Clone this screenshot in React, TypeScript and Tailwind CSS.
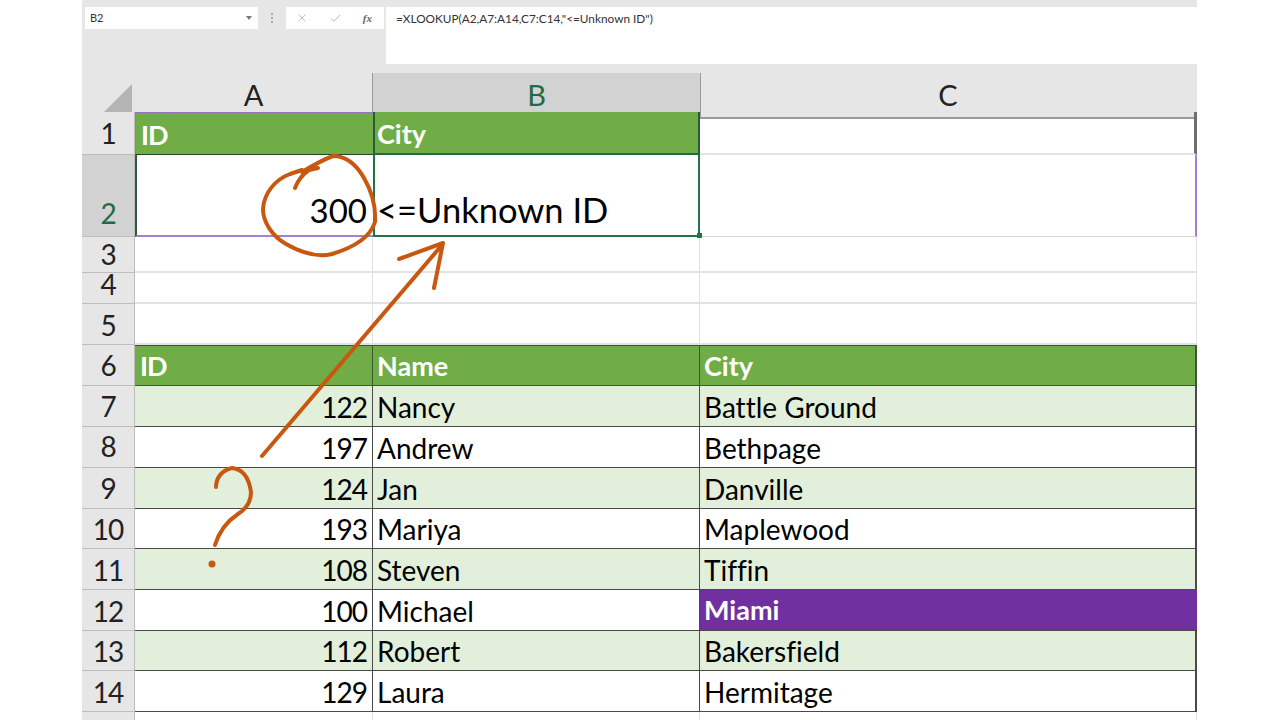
import { Check, X } from "lucide-react";

const people = [
  { n: "7", id: "122", name: "Nancy", city: "Battle Ground", h: "h-[41px]", band: true, pb: "pb-[6px]" },
  { n: "8", id: "197", name: "Andrew", city: "Bethpage", h: "h-[41px]", band: false, pb: "pb-[7px]" },
  { n: "9", id: "124", name: "Jan", city: "Danville", h: "h-[41px]", band: true, pb: "pb-[6px]" },
  { n: "10", id: "193", name: "Mariya", city: "Maplewood", h: "h-[40px]", band: false, pb: "pb-[5px]" },
  { n: "11", id: "108", name: "Steven", city: "Tiffin", h: "h-[41px]", band: true, pb: "pb-[5px]" },
  { n: "12", id: "100", name: "Michael", city: "Miami", h: "h-[41px]", band: false, pb: "pb-[5px]" },
  { n: "13", id: "112", name: "Robert", city: "Bakersfield", h: "h-[40px]", band: true, pb: "pb-[5px]" },
  { n: "14", id: "129", name: "Laura", city: "Hermitage", h: "h-[41px]", band: false, pb: "pb-[5px]" },
];

function RowNum({ n, active, pb = "pb-[6px]" }: { n: string; active?: boolean; pb?: string }) {
  return (
    <div
      className={`flex min-h-0 items-end justify-center border-r border-b border-[#bdbdbd] text-[28px] leading-[28px] tracking-[-1px] ${pb} ${
        active ? "bg-[#d2d2d2] text-[#1f6b45]" : "bg-[#e6e6e6] text-[#222]"
      }`}
    >
      {n}
    </div>
  );
}

export default function App() {
  return (
    <div className="relative h-[720px] w-[1280px] overflow-hidden bg-white pl-[82px] font-['Lato','Liberation_Sans',sans-serif] text-black [font-variant-ligatures:none]">
      <div className="w-[1115px]">
        {/* Formula bar */}
        <div className="flex h-[73px] items-start bg-[#e6e6e6] pt-[7px] pl-[3px]">
          <div className="flex h-[22px] w-[173px] items-center justify-between bg-white px-[5px] text-[11px] text-[#333]">
            B2
            <span className="mr-[1px] h-0 w-0 border-x-[3px] border-t-[4px] border-x-transparent border-t-[#777]" />
          </div>
          <div className="flex h-[22px] w-[28px] flex-col items-center justify-center gap-[2px]">
            <span className="h-[2px] w-[2px] bg-[#aaa]" />
            <span className="h-[2px] w-[2px] bg-[#aaa]" />
            <span className="h-[2px] w-[2px] bg-[#aaa]" />
          </div>
          <div className="flex h-[22px] w-[98px] items-center justify-between bg-white pr-[12px] pl-[10px] text-[#aaa]">
            <X size={12} strokeWidth={1.5} />
            <Check size={13} strokeWidth={1.5} />
            <span className="font-['Liberation_Serif',serif] text-[11px] font-bold italic text-[#666]">fx</span>
          </div>
          <div className="ml-[2px] h-[57px] flex-1 bg-white pt-[4px] pl-[10px] text-[11.8px] leading-[15px] text-[#333]">
            =XLOOKUP(A2,A7:A14,C7:C14,"&lt;=Unknown ID")
          </div>
        </div>

        {/* Column headers */}
        <div className="grid h-[39px] grid-cols-[53px_238px_327px_497px]">
          <div className="flex items-end justify-end bg-[#e6e6e6] p-[3px]">
            <div className="h-0 w-0 border-b-[32px] border-l-[32px] border-b-[#b4b4b4] border-l-transparent" />
          </div>
          <div className="flex items-center justify-center border-r border-b-2 border-[#9a9a9a] bg-[#e6e6e6] text-[29px] text-[#222]">A</div>
          <div className="flex items-center justify-center border-b-2 border-[#1f6b45] bg-[#d2d2d2] text-[29px] text-[#1f6b45]">B</div>
          <div className="flex items-center justify-center border-b-2 border-l border-[#9a9a9a] bg-[#e6e6e6] pr-[2px] text-[29px] text-[#222]">C</div>
        </div>

        {/* Rows 1 and 2 */}
        <div className="grid h-[43px] grid-cols-[53px_238px_327px_497px] grid-rows-[minmax(0,1fr)]">
          <RowNum n="1" pb="pb-[7px]" />
          <div className="flex items-center border-t border-b border-l border-t-[#9b6fc4] border-b-[#23452a] border-l-[#9b6fc4] bg-[#70ad47] pt-[3px] pl-[5px] text-[27px] font-bold tracking-[-1px] text-white">ID</div>
          <div className="flex items-center border-x-2 border-b-2 border-x-[#2c5a3c] border-b-[#1f6b45] bg-[#70ad47] pt-[3px] pl-[2px] text-[27px] font-bold text-white">City</div>
          <div className="border-r-[3px] border-b-2 border-r-[#6e6e6e] border-b-[#e4e4e4]" />
        </div>
        <div className="grid h-[82px] grid-cols-[53px_238px_327px_497px] grid-rows-[minmax(0,1fr)]">
          <RowNum n="2" active pb="pb-[9px]" />
          <div className="flex items-end justify-end border-b-2 border-l-2 border-b-[#a57fd0] border-l-[#2c5a3c] pr-[6px] pb-[3px] text-[33px] leading-[44px]">300</div>
          <div className="relative flex items-end border-x-2 border-b-2 border-[#217346] pb-[3px] pl-[2px] text-[34.5px] leading-[44px]">
            &lt;=Unknown ID
            <span className="absolute right-[-4px] bottom-[-3px] h-[5px] w-[5px] bg-[#217346]" />
          </div>
          <div className="border-r-2 border-b border-r-[#a57fd0] border-b-[#d8d8d8]" />
        </div>

        {/* Empty rows */}
        {[
          { n: "3", h: "h-[36px]", pb: "pb-[4px]" },
          { n: "4", h: "h-[31px]", pb: "pb-[5px]" },
          { n: "5", h: "h-[41px]", pb: "pb-[5px]" },
        ].map((r) => (
          <div key={r.n} className={`grid grid-cols-[53px_238px_327px_497px] grid-rows-[minmax(0,1fr)] ${r.h}`}>
            <RowNum n={r.n} pb={r.pb} />
            <div className="border-r border-b-2 border-[#e2e2e2]" />
            <div className="border-r border-b-2 border-[#e2e2e2]" />
            <div className="border-r border-b-2 border-[#e2e2e2]" />
          </div>
        ))}

        {/* Table header */}
        <div className="grid h-[41px] grid-cols-[53px_238px_327px_497px] grid-rows-[minmax(0,1fr)]">
          <RowNum n="6" />
          <div className="flex items-center border-t border-r border-b border-[#3c5a30] bg-[#70ad47] pt-[2px] pl-[5px] text-[27px] font-bold tracking-[-1px] text-white">ID</div>
          <div className="flex items-center border-t border-r border-b border-[#3c5a30] bg-[#70ad47] pt-[2px] pl-[4px] text-[27px] font-bold text-white">Name</div>
          <div className="flex items-center border-t border-r-2 border-b border-[#3c5a30] bg-[#70ad47] pt-[2px] pl-[4px] text-[27px] font-bold text-white">City</div>
        </div>

        {/* Table body */}
        {people.map((p) => (
          <div key={p.n} className={`grid grid-cols-[53px_238px_327px_497px] grid-rows-[minmax(0,1fr)] ${p.h}`}>
            <RowNum n={p.n} pb={p.pb} />
            <div className={`flex items-center justify-end border-r border-b border-[#4a4a4a] pt-[1px] pr-[5px] text-[28px] tracking-[-1px] ${p.band ? "bg-[#e2efda]" : "bg-white"}`}>{p.id}</div>
            <div className={`flex items-center border-r border-b border-[#4a4a4a] pt-[1px] pl-[4px] text-[28px] ${p.band ? "bg-[#e2efda]" : "bg-white"}`}>{p.name}</div>
            {p.city === "Miami" ? (
              <div className="flex items-center border-b border-[#4a4a4a] bg-[#7030a0] pt-[1px] pl-[4px] text-[27px] font-bold text-white">{p.city}</div>
            ) : (
              <div className={`flex items-center border-r-2 border-b border-[#4a4a4a] pt-[1px] pl-[4px] text-[28px] ${p.band ? "bg-[#e2efda]" : "bg-white"}`}>{p.city}</div>
            )}
          </div>
        ))}

        {/* Row 15, cut off */}
        <div className="grid h-[8px] grid-cols-[53px_238px_327px_497px]">
          <div className="border-r border-[#bdbdbd] bg-[#e6e6e6]" />
          <div className="border-r border-[#e2e2e2]" />
          <div className="border-r border-[#e2e2e2]" />
          <div className="border-r border-[#e2e2e2]" />
        </div>
      </div>

      {/* Hand-drawn ink on top of the sheet */}
      <svg className="absolute top-0 left-0" width="1280" height="720" viewBox="0 0 1280 720" fill="none" stroke="#c8580f" strokeLinecap="round" strokeLinejoin="round">
        <path strokeWidth="4" d="M295 188C298 180 303 174 309 170L318 168M302 172C312 166 322 160 333 156C346 156 356 164 364 178C371 190 376 206 375 222C370 238 352 248 332 254C316 258 300 252 286 244C272 236 263 222 263 209C264 194 274 180 290 174L302 170" />
        <path strokeWidth="4" d="M262 456L442 245M399 259L443 243L434 288" />
        <path strokeWidth="4" d="M216 487C216 478 222 470 232 468C243 469 249 478 251 492C251 503 246 509 238 514C226 522 219 532 215 545" />
        <circle cx="212" cy="564" r="3.5" fill="#c8580f" stroke="none" />
      </svg>
    </div>
  );
}
